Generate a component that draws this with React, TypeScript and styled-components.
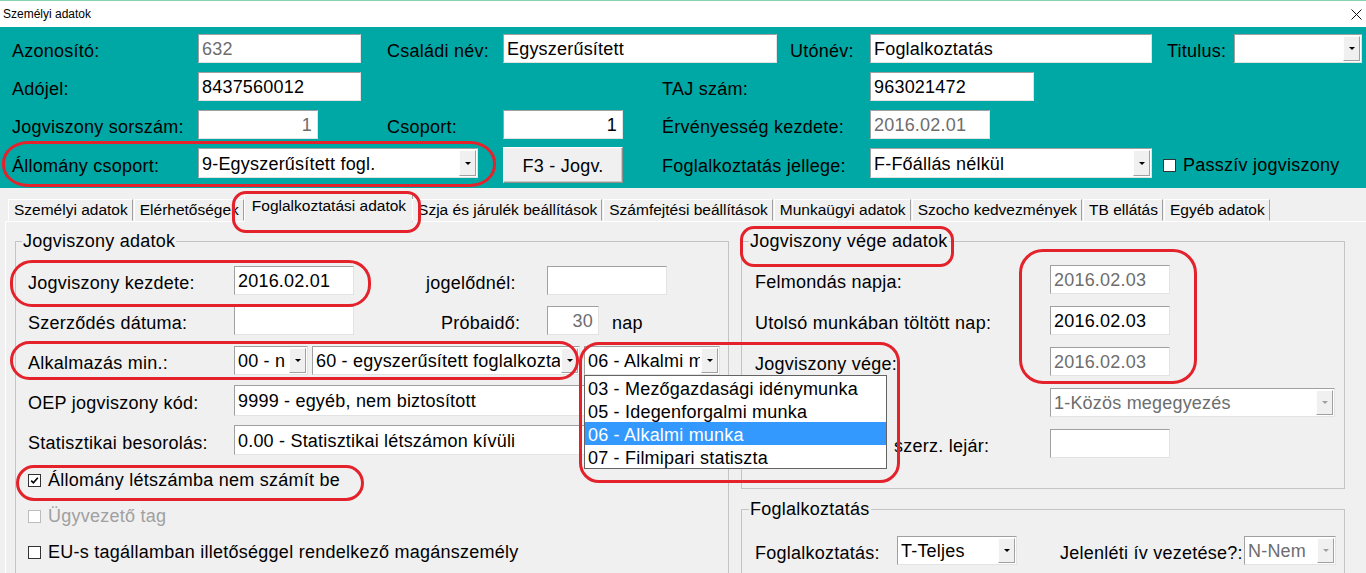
import React from 'react';
import styled, { createGlobalStyle } from 'styled-components';

const FONT = `"Liberation Sans", Arial, sans-serif`;

const Global = createGlobalStyle`
  html, body { margin: 0; padding: 0; background: #f0f0f0; }
  body { font-family: ${FONT}; color: #000; overflow: hidden; }
  * { box-sizing: border-box; }
`;

const Window = styled.div`
  position: relative;
  width: 1366px;
  height: 573px;
  overflow: hidden;
  background: #f0f0f0;
  display: flex;
  flex-direction: column;
`;

const TopLine = styled.div`
  height: 1px;
  background: #86d3b1;
  flex: none;
`;

const TitleBar = styled.div`
  height: 26px;
  flex: none;
  background: #fff;
  display: flex;
  align-items: center;
  justify-content: space-between;
  padding: 0 3px 0 3px;
  font-size: 12px;
  color: #000;
`;

const CloseIcon = styled.svg`
  width: 11px;
  height: 11px;
  margin-right: 1px;
`;

const Header = styled.div`
  height: 161px;
  flex: none;
  background: #00a8a5;
  padding: 7px 0 0 12px;
  display: flex;
  flex-direction: column;
  gap: 9px;
`;

const HRow = styled.div<{ $h?: number }>`
  display: flex;
  align-items: center;
  height: ${(p) => p.$h ?? 29}px;
`;

const Label = styled.div<{ $w?: number; $ml?: number; $pl?: number }>`
  flex: none;
  width: ${(p) => (p.$w ? `${p.$w}px` : 'auto')};
  margin-left: ${(p) => p.$ml ?? 0}px;
  padding-left: ${(p) => p.$pl ?? 0}px;
  font-size: 18px;
  letter-spacing: 0.25px;
  white-space: nowrap;
  padding-top: 6px;
`;

const Field = styled.div<{ $w: number; $h?: number; $ml?: number; $right?: boolean; $muted?: boolean }>`
  flex: none;
  width: ${(p) => p.$w}px;
  height: ${(p) => p.$h ?? 29}px;
  margin-left: ${(p) => p.$ml ?? 0}px;
  background: #fff;
  border: 1px solid;
  border-color: #a0a0a0 #e3e3e3 #e3e3e3 #a0a0a0;
  font-size: 18px;
  letter-spacing: 0.2px;
  display: flex;
  align-items: center;
  justify-content: ${(p) => (p.$right ? 'flex-end' : 'flex-start')};
  padding: 2px ${(p) => (p.$right ? 5 : 3)}px 0 3px;
  color: ${(p) => (p.$muted ? '#6d6d6d' : '#000')};
  white-space: nowrap;
  overflow: hidden;
`;

const ComboBox = styled.div<{ $w: number; $ml?: number; $h?: number }>`
  position: relative;
  flex: none;
  width: ${(p) => p.$w}px;
  height: ${(p) => p.$h ?? 29}px;
  margin-left: ${(p) => p.$ml ?? 0}px;
  background: #fff;
  border: 1px solid;
  border-color: #a0a0a0 #e3e3e3 #e3e3e3 #a0a0a0;
  display: flex;
  align-items: stretch;
`;

const ComboText = styled.div<{ $muted?: boolean }>`
  flex: 1;
  min-width: 0;
  overflow: hidden;
  white-space: nowrap;
  font-size: 18px;
  letter-spacing: 0.2px;
  display: flex;
  align-items: center;
  padding: 2px 0 0 3px;
  color: ${(p) => (p.$muted ? '#6d6d6d' : '#000')};
`;

const DropBtn = styled.div`
  flex: none;
  width: 17px;
  margin: 1px;
  background: #f0f0f0;
  border: 1px solid;
  border-color: #fdfdfd #a0a0a0 #a0a0a0 #fdfdfd;
  display: flex;
  align-items: center;
  justify-content: center;
`;

const Arrow = styled.span<{ $disabled?: boolean }>`
  width: 0;
  height: 0;
  border-left: 3px solid transparent;
  border-right: 3px solid transparent;
  border-top: 3px solid ${(p) => (p.$disabled ? '#a0a0a0' : '#000')};
`;

const DropList = styled.div`
  position: absolute;
  top: calc(100% + 1px);
  left: -1px;
  width: 303px;
  background: #fff;
  border: 1px solid #646464;
  z-index: 5;
  display: flex;
  flex-direction: column;
`;

const DropItem = styled.div<{ $active?: boolean }>`
  height: 23px;
  display: flex;
  align-items: center;
  padding: 4px 0 0 3px;
  font-size: 18px;
  letter-spacing: 0.2px;
  white-space: nowrap;
  background: ${(p) => (p.$active ? '#3399ff' : 'transparent')};
  color: ${(p) => (p.$active ? '#fff' : '#000')};
`;

const Button = styled.div<{ $w: number; $ml?: number }>`
  flex: none;
  width: ${(p) => p.$w}px;
  height: 36px;
  margin-left: ${(p) => p.$ml ?? 0}px;
  margin-top: 4px;
  background: #f0f0f0;
  border: 1px solid;
  border-color: #fff #8f8f8f #8f8f8f #fff;
  box-shadow: inset -1px -1px 0 #c8c8c8;
  font-size: 18px;
  letter-spacing: 0.25px;
  display: flex;
  align-items: center;
  justify-content: center;
  padding-top: 2px;
`;

const CheckWrap = styled.div<{ $ml?: number; $disabled?: boolean }>`
  display: flex;
  align-items: center;
  gap: 7px;
  margin-left: ${(p) => p.$ml ?? 0}px;
  padding-top: 4px;
  font-size: 18px;
  letter-spacing: 0.25px;
  white-space: nowrap;
  color: ${(p) => (p.$disabled ? '#a0a0a0' : '#000')};
`;

const Box = styled.div<{ $disabled?: boolean }>`
  flex: none;
  width: 13px;
  height: 13px;
  background: #fff;
  border: 1px solid ${(p) => (p.$disabled ? '#bcbcbc' : '#333')};
  display: flex;
  align-items: center;
  justify-content: center;
`;

const Body = styled.div`
  flex: 1;
  display: flex;
  flex-direction: column;
  padding-top: 11px;
  min-height: 0;
`;

const TabStrip = styled.div`
  display: flex;
  align-items: flex-end;
  padding-left: 8px;
  height: 22px;
  position: relative;
  z-index: 2;
`;

const Tab = styled.div<{ $active?: boolean }>`
  flex: none;
  height: ${(p) => (p.$active ? 29 : 22)}px;
  margin: ${(p) => (p.$active ? '0 -1px -1px -1px' : '0 1px 0 0')};
  padding: ${(p) => (p.$active ? '0 6px 4px 7px' : '0 4px 0 5px')};
  background: #f0f0f0;
  border: 1px solid;
  border-color: #fff #a0a0a0 transparent #fff;
  font-size: 15.5px;
  white-space: nowrap;
  display: flex;
  align-items: center;
`;

const Panel = styled.div`
  flex: 1;
  margin-left: 5px;
  border-top: 1px solid #fff;
  border-left: 1px solid #fff;
  padding: 9px 0 0 9px;
  display: flex;
  gap: 12px;
  align-items: flex-start;
`;

const Group = styled.fieldset<{ $w: number; $pt: number; $pb?: number; $pl?: number; $minH?: number }>`
  margin: 0;
  min-width: 0;
  width: ${(p) => p.$w}px;
  min-height: ${(p) => p.$minH ?? 0}px;
  border: 1px solid #c4c4c4;
  padding: ${(p) => p.$pt}px 0 ${(p) => p.$pb ?? 0}px ${(p) => p.$pl ?? 12}px;
  display: flex;
  flex-direction: column;
`;

const Legend = styled.legend`
  font-size: 18px;
  letter-spacing: 0.25px;
  line-height: 20px;
  padding: 0 1px;
  margin-left: -6px;
`;

const RightCol = styled.div`
  display: flex;
  flex-direction: column;
  gap: 10px;
`;

const Rows = styled.div<{ $gap: number }>`
  display: flex;
  flex-direction: column;
  gap: ${(p) => p.$gap}px;
`;

const FRow = styled.div<{ $h?: number }>`
  display: flex;
  align-items: center;
  height: ${(p) => p.$h ?? 30}px;
`;

const Annotations = styled.div`
  position: absolute;
  inset: 0;
  pointer-events: none;
  z-index: 10;
`;

const Ring = styled.div<{ $x: number; $y: number; $w: number; $h: number; $r: string }>`
  position: absolute;
  left: ${(p) => p.$x}px;
  top: ${(p) => p.$y}px;
  width: ${(p) => p.$w}px;
  height: ${(p) => p.$h}px;
  border: 3px solid #e3222b;
  border-radius: ${(p) => p.$r};
`;

type ComboProps = {
  w: number;
  ml?: number;
  h?: number;
  text: string;
  muted?: boolean;
  disabled?: boolean;
  children?: React.ReactNode;
};

const Combo = ({ w, ml, h, text, muted, disabled, children }: ComboProps) => (
  <ComboBox $w={w} $ml={ml} $h={h}>
    <ComboText $muted={muted}>{text}</ComboText>
    <DropBtn>
      <Arrow $disabled={disabled} />
    </DropBtn>
    {children}
  </ComboBox>
);

const Check = ({ checked, disabled, label, ml }: { checked?: boolean; disabled?: boolean; label: string; ml?: number }) => (
  <CheckWrap $ml={ml} $disabled={disabled}>
    <Box $disabled={disabled}>
      {checked && (
        <svg width="9" height="9" viewBox="0 0 9 9">
          <path d="M1.2 4.6 L3.4 6.8 L7.8 1.8" stroke="#000" strokeWidth="1.6" fill="none" />
        </svg>
      )}
    </Box>
    {label}
  </CheckWrap>
);

const tabs = [
  'Személyi adatok',
  'Elérhetőségek',
  'Foglalkoztatási adatok',
  'Szja és járulék beállítások',
  'Számfejtési beállítások',
  'Munkaügyi adatok',
  'Szocho kedvezmények',
  'TB ellátás',
  'Egyéb adatok',
];

export default function App() {
  return (
    <Window>
      <Global />
      <TopLine />
      <TitleBar>
        <span>Személyi adatok</span>
        <CloseIcon viewBox="0 0 11 11">
          <path d="M0.5 0.5 L10.5 10.5 M10.5 0.5 L0.5 10.5" stroke="#111" strokeWidth="1" />
        </CloseIcon>
      </TitleBar>

      <Header>
        <HRow>
          <Label $w={186}>Azonosító:</Label>
          <Field $w={163} $muted>632</Field>
          <Label $ml={26} $w={116}>Családi név:</Label>
          <Field $w={274}>Egyszerűsített</Field>
          <Label $ml={13} $w={80}>Utónév:</Label>
          <Field $w={282}>Foglalkoztatás</Field>
          <Label $ml={15} $w={67}>Titulus:</Label>
          <Combo w={128} text="" />
        </HRow>
        <HRow>
          <Label $w={186}>Adójel:</Label>
          <Field $w={163}>8437560012</Field>
          <Label $ml={301} $w={208}>TAJ szám:</Label>
          <Field $w={164}>963021472</Field>
        </HRow>
        <HRow>
          <Label $w={186}>Jogviszony sorszám:</Label>
          <Field $w={120} $right $muted>1</Field>
          <Label $ml={69} $w={116}>Csoport:</Label>
          <Field $w={120} $right>1</Field>
          <Label $ml={39} $w={208}>Érvényesség kezdete:</Label>
          <Field $w={120} $muted>2016.02.01</Field>
        </HRow>
        <HRow $h={30}>
          <Label $w={186}>Állomány csoport:</Label>
          <Combo w={280} h={30} text="9-Egyszerűsített fogl." />
          <Button $w={120} $ml={25}>F3 - Jogv.</Button>
          <Label $ml={39} $w={208}>Foglalkoztatás jellege:</Label>
          <Combo w={282} h={30} text="F-Főállás nélkül" />
          <Check ml={11} label="Passzív jogviszony" />
        </HRow>
      </Header>

      <Body>
        <TabStrip>
          {tabs.map((t) => (
            <Tab key={t} $active={t === 'Foglalkoztatási adatok'}>
              {t}
            </Tab>
          ))}
        </TabStrip>
        <Panel>
          <Group $w={714} $pt={14} $minH={400}>
            <Legend>Jogviszony adatok</Legend>
            <Rows $gap={10}>
              <FRow>
                <Label $w={206}>Jogviszony kezdete:</Label>
                <Field $w={120}>2016.02.01</Field>
                <Label $ml={72} $w={121}>jogelődnél:</Label>
                <Field $w={120} />
              </FRow>
              <FRow>
                <Label $w={206}>Szerződés dátuma:</Label>
                <Field $w={120} />
                <Label $ml={87} $w={106}>Próbaidő:</Label>
                <Field $w={52} $right $muted>30</Field>
                <Label $ml={13}>nap</Label>
              </FRow>
              <FRow>
                <Label $w={206}>Alkalmazás min.:</Label>
                <Combo w={74} h={29} text="00 - n" />
                <Combo w={268} ml={4} h={29} text="60 - egyszerűsített foglalkozta" />
                <Combo w={136} ml={4} h={29} text="06 - Alkalmi m">
                  <DropList>
                    <DropItem>03 - Mezőgazdasági idénymunka</DropItem>
                    <DropItem>05 - Idegenforgalmi munka</DropItem>
                    <DropItem $active>06 - Alkalmi munka</DropItem>
                    <DropItem>07 - Filmipari statiszta</DropItem>
                  </DropList>
                </Combo>
              </FRow>
              <FRow>
                <Label $w={206}>OEP jogviszony kód:</Label>
                <Combo w={484} h={31} text="9999 - egyéb, nem biztosított" />
              </FRow>
              <FRow>
                <Label $w={206}>Statisztikai besorolás:</Label>
                <Combo w={484} h={30} text="0.00 - Statisztikai létszámon kívüli" />
              </FRow>
              <FRow $h={26}>
                <Check checked label="Állomány létszámba nem számít be" />
              </FRow>
              <FRow $h={26}>
                <Check disabled label="Ügyvezető tag" />
              </FRow>
              <FRow $h={26}>
                <Check label="EU-s tagállamban illetőséggel rendelkező magánszemély" />
              </FRow>
            </Rows>
          </Group>
          <RightCol>
            <Group $w={604} $pt={13} $pb={30} $pl={13}>
              <Legend>Jogviszony vége adatok</Legend>
              <Rows $gap={11}>
                <FRow>
                  <Label $w={295}>Felmondás napja:</Label>
                  <Field $w={120} $muted>2016.02.03</Field>
                </FRow>
                <FRow>
                  <Label $w={295}>Utolsó munkában töltött nap:</Label>
                  <Field $w={120}>2016.02.03</Field>
                </FRow>
                <FRow>
                  <Label $w={295}>Jogviszony vége:</Label>
                  <Field $w={120} $muted>2016.02.03</Field>
                </FRow>
                <FRow>
                  <Label $w={295} />
                  <Combo w={285} h={29} text="1-Közös megegyezés" muted disabled />
                </FRow>
                <FRow>
                  <Label $w={295} $pl={139}>szerz. lejár:</Label>
                  <Field $w={120} />
                </FRow>
              </Rows>
            </Group>
            <Group $w={604} $pt={17} $pb={20} $pl={13}>
              <Legend>Foglalkoztatás</Legend>
              <FRow $h={29}>
                <Label $w={142}>Foglalkoztatás:</Label>
                <Combo w={120} h={29} text="T-Teljes" />
                <Label $ml={43} $w={184}>Jelenléti ív vezetése?:</Label>
                <Combo w={92} h={29} text="N-Nem" muted disabled />
              </FRow>
            </Group>
          </RightCol>
        </Panel>
      </Body>

      <Annotations>
        <Ring $x={2} $y={141} $w={494} $h={46} $r="26px / 22px" />
        <Ring $x={232} $y={191} $w={189} $h={42} $r="14px" />
        <Ring $x={10} $y={260} $w={361} $h={47} $r="22px" />
        <Ring $x={10} $y={341} $w={569} $h={39} $r="20px" />
        <Ring $x={579} $y={342} $w={321} $h={141} $r="20px" />
        <Ring $x={16} $y={465} $w={348} $h={36} $r="18px" />
        <Ring $x={740} $y={226} $w={214} $h={41} $r="14px" />
        <Ring $x={1019} $y={249} $w={178} $h={135} $r="24px" />
      </Annotations>
    </Window>
  );
}
